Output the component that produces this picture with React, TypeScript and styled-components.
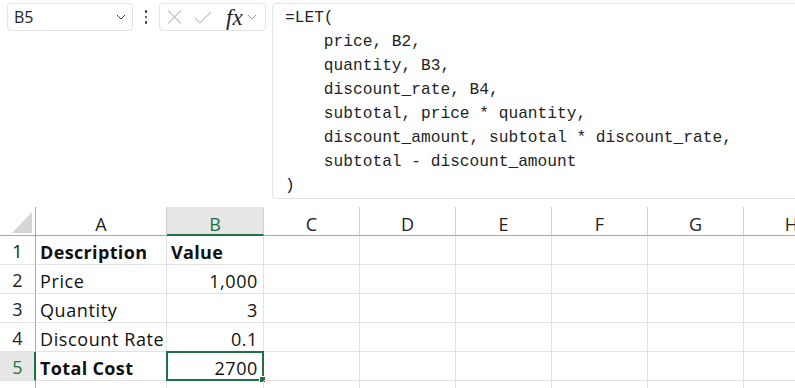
import React from 'react'
import styled, { createGlobalStyle } from 'styled-components'

const GlobalStyle = createGlobalStyle`
  html, body {
    margin: 0;
    padding: 0;
    background: #ffffff;
    overflow: hidden;
  }
  body {
    font-family: 'Open Sans', 'Noto Sans', sans-serif;
    color: #242424;
  }
`

const Page = styled.div`
  width: 795px;
  height: 388px;
  overflow: hidden;
  display: flex;
  flex-direction: column;
  gap: 8px;
`

const TopBar = styled.div`
  display: flex;
  align-items: flex-start;
  padding: 3px 0 0 7px;
  margin-right: -20px;
`

const NameBox = styled.div`
  width: 126px;
  height: 28px;
  box-sizing: border-box;
  border: 1px solid #e3e3e3;
  border-radius: 4px;
  display: flex;
  align-items: center;
  justify-content: space-between;
  padding: 0 6px 0 6px;
  font-size: 16px;
  color: #242424;
`

const Dots = styled.div`
  width: 26px;
  height: 28px;
  display: flex;
  flex-direction: column;
  align-items: center;
  justify-content: center;
  gap: 3px;

  span {
    width: 2.5px;
    height: 2.5px;
    background: #333;
    border-radius: 1px;
  }
`

const FxGroup = styled.div`
  width: 107px;
  height: 28px;
  box-sizing: border-box;
  border: 1px solid #e3e3e3;
  border-radius: 4px;
  display: flex;
  align-items: center;
  padding-left: 7px;
  gap: 12px;
`

const Fx = styled.span`
  font-family: 'Liberation Serif', 'DejaVu Serif', serif;
  font-style: italic;
  font-size: 23px;
  color: #222;
  margin-left: 2px;
  display: flex;
  align-items: center;
  gap: 4px;
  line-height: 1;
`

const FormulaBar = styled.pre`
  flex: 1;
  margin: 0 0 0 6px;
  height: 196px;
  box-sizing: border-box;
  border: 1px solid #e3e3e3;
  border-radius: 4px;
  padding: 2px 12px 0 12px;
  font-family: 'Liberation Mono', 'DejaVu Sans Mono', monospace;
  font-size: 16.2px;
  line-height: 24px;
  color: #242424;
`

const Sheet = styled.div`
  display: grid;
  grid-template-columns: 36px 131px 97px repeat(6, 96px);
  grid-auto-rows: 29px;
  width: 840px;
`

const Corner = styled.div`
  border-right: 1px solid #a8a8a8;
  border-bottom: 1px solid #a8a8a8;
  display: flex;
  align-items: flex-end;
  justify-content: flex-end;
  padding: 0 3px 2px 0;
  box-sizing: border-box;
`

const ColHeader = styled.div<{ $active?: boolean }>`
  box-sizing: border-box;
  border-right: 1px solid #d0d0d0;
  border-bottom: ${p => (p.$active ? '2px solid #1e7145' : '1px solid #a8a8a8')};
  background: ${p => (p.$active ? '#e6e6e6' : '#ffffff')};
  color: ${p => (p.$active ? '#1e7145' : '#222')};
  display: flex;
  justify-content: center;
  align-items: center;
  padding-top: ${p => (p.$active ? '7px' : '6px')};
  font-size: 18px;
`

const RowHeader = styled.div<{ $active?: boolean }>`
  box-sizing: border-box;
  border-right: ${p => (p.$active ? '2px solid #1e7145' : '1px solid #a8a8a8')};
  border-bottom: 1px solid #e1e1e1;
  background: ${p => (p.$active ? '#e6e6e6' : '#ffffff')};
  color: ${p => (p.$active ? '#1e7145' : '#222')};
  display: flex;
  justify-content: center;
  align-items: center;
  padding: 2px 0 0 ${p => (p.$active ? '1px' : '0')};
  font-size: 18px;
`

const Cell = styled.div<{ $right?: boolean; $bold?: boolean; $selected?: boolean }>`
  position: relative;
  box-sizing: border-box;
  border-right: 1px solid #e1e1e1;
  border-bottom: 1px solid #e1e1e1;
  display: flex;
  align-items: center;
  justify-content: ${p => (p.$right ? 'flex-end' : 'flex-start')};
  padding: 3px 5px 0 4px;
  font-size: 18px;
  letter-spacing: ${p => (p.$bold ? '0.35px' : '0.6px')};
  font-weight: ${p => (p.$bold ? 700 : 400)};
  color: #111;
  white-space: nowrap;

  ${p =>
    p.$selected &&
    `
    &::before {
      content: '';
      position: absolute;
      left: -1px;
      top: -1px;
      right: -1px;
      bottom: -1px;
      border: 2px solid #1e7145;
    }
    &::after {
      content: '';
      position: absolute;
      right: -3px;
      bottom: -3px;
      width: 5px;
      height: 5px;
      background: #1e7145;
      border: 1px solid #fff;
    }
  `}
`

const Chevron = ({ size = 10, color = '#555' }: { size?: number; color?: string }) => (
  <svg width={size} height={size * 0.6} viewBox='0 0 10 6'>
    <path d='M1 1 L5 5 L9 1' fill='none' stroke={color} strokeWidth='1' />
  </svg>
)

const formula = `=LET(
    price, B2,
    quantity, B3,
    discount_rate, B4,
    subtotal, price * quantity,
    discount_amount, subtotal * discount_rate,
    subtotal - discount_amount
)`

const columns = ['A', 'B', 'C', 'D', 'E', 'F', 'G', 'H']

const rows: { label: string; a: string; b: string; boldA?: boolean; boldB?: boolean }[] = [
  { label: '1', a: 'Description', b: 'Value', boldA: true, boldB: true },
  { label: '2', a: 'Price', b: '1,000' },
  { label: '3', a: 'Quantity', b: '3' },
  { label: '4', a: 'Discount Rate', b: '0.1' },
  { label: '5', a: 'Total Cost', b: '2700', boldA: true },
  { label: '', a: '', b: '' },
]

export default function App() {
  return (
    <>
      <GlobalStyle />
      <Page>
        <TopBar>
          <NameBox>
            <span>B5</span>
            <Chevron size={10} color='#444' />
          </NameBox>
          <Dots>
            <span />
            <span />
            <span />
          </Dots>
          <FxGroup>
            <svg width='15' height='14' viewBox='0 0 15 14'>
              <path d='M1 0.5 L14 13.5 M14 0.5 L1 13.5' stroke='#c4c4c4' strokeWidth='1.1' fill='none' />
            </svg>
            <svg width='18' height='13' viewBox='0 0 18 13'>
              <path d='M1 7 L6 12 L17 1' stroke='#c4c4c4' strokeWidth='1.1' fill='none' />
            </svg>
            <Fx>
              fx
              <Chevron size={10} color='#999' />
            </Fx>
          </FxGroup>
          <FormulaBar>{formula}</FormulaBar>
        </TopBar>

        <Sheet>
          <Corner>
            <svg width='20' height='21' viewBox='0 0 20 21'>
              <path d='M20 0 L20 21 L0 21 Z' fill='#d6d6d6' />
            </svg>
          </Corner>
          {columns.map(c => (
            <ColHeader key={c} $active={c === 'B'}>
              {c}
            </ColHeader>
          ))}
          {rows.map((r, i) => (
            <React.Fragment key={i}>
              <RowHeader $active={i === 4}>{r.label}</RowHeader>
              <Cell $bold={r.boldA}>{r.a}</Cell>
              <Cell $bold={r.boldB} $right={i > 0} $selected={i === 4}>
                {r.b}
              </Cell>
              {columns.slice(2).map(c => (
                <Cell key={c} />
              ))}
            </React.Fragment>
          ))}
        </Sheet>
      </Page>
    </>
  )
}
